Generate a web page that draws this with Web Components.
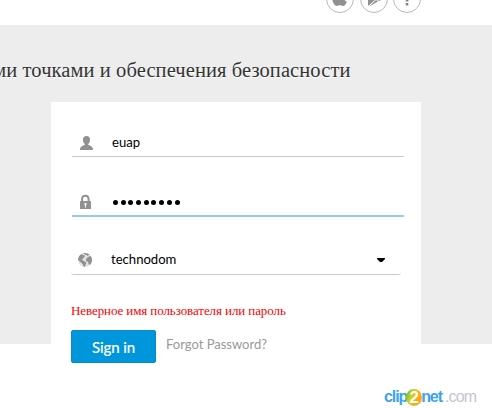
<!DOCTYPE html>
<html lang="ru"><head><meta charset="utf-8"><title>Sign in</title>
<style>html,body{margin:0;height:100%;overflow:hidden;background:#fff}</style></head>
<body><login-page></login-page>
<script>
const define=(name,html)=>{const t=document.createElement('template');t.innerHTML=html;
customElements.define(name,class extends HTMLElement{constructor(){super();this.attachShadow({mode:'open'}).append(t.content.cloneNode(true));}});};

define('round-link',`<style>:host{display:block;box-sizing:border-box;width:28px;height:28px;border:1px solid #b8b8b8;border-radius:50%}svg,::slotted(svg){display:block;width:26px;height:26px}</style><slot></slot>`);

define('form-field',`<style>
:host{display:flex;box-sizing:border-box;align-items:center;height:28px;width:332px;border-bottom:1px solid #c8c8c8;font:13.1px/16px Lato,sans-serif;color:#000}
.icon{display:block;width:16px;height:16px;margin-left:6px}
.value{flex:1;margin:-2px 0 0 18px;white-space:pre}
::slotted(svg){display:block}
</style><span class="icon"><slot name="icon"></slot></span><span class="value"><slot></slot></span><slot name="end"></slot>`);

define('sign-button',`<style>:host{display:block}button{display:block;box-sizing:border-box;width:85px;height:33px;padding:0;border:1px solid #078acb;border-radius:2px;background:#0096db;color:#fff;font:400 15px/30px Lato,sans-serif;letter-spacing:-.1px;-webkit-text-stroke:.2px #fff}</style><button><slot></slot></button>`);

define('clip-mark',`<style>:host{display:flex;align-items:center;font:bold 16px/20px "Liberation Sans",sans-serif;letter-spacing:-1.1px;color:#3ba4e8}
.two{display:block;width:16px;height:17px;border-radius:50%;background:linear-gradient(115deg,#62ba18 5%,#c7d51b 35%,#ffa51b 70%);color:#fff;font-size:17px;line-height:17px;text-align:center;letter-spacing:0;margin:0 -1px 0 -1px}
.com{font-weight:normal;color:#c5c5cf;margin-left:3px;letter-spacing:-.8px}</style>
<span>clip</span><span class="two">2</span><span>net</span><span class="com">.com</span>`);

define('login-page',`<style>
:host{display:block;position:relative;width:492px;height:408px;overflow:hidden;background:#fff}
header{box-sizing:border-box;height:25px;display:flex;justify-content:flex-end;padding-right:71px;gap:5.5px}
header round-link{margin-top:-15px;flex:none}
main{height:319px;background:#ededed}
h1{box-sizing:border-box;height:77px;width:350.5px;margin:0;padding-top:33px;display:flex;justify-content:flex-end;font:normal 20.5px/24px "Liberation Serif",serif;letter-spacing:.09px;color:#333;white-space:nowrap;text-shadow:0 1px #fff}
form{display:flex;flex-direction:column;box-sizing:border-box;width:370px;height:306px;margin-left:51px;padding:27px 17px 0 21px;background:#fff}
.pass{margin-top:31px;height:29px;border-bottom:2px solid #97caf2}
.domain{margin:29px 0 0 -1px;width:330px;height:29px;border-bottom-color:#ccc;border-radius:0 0 3px 3px}
.bullets{display:flex;gap:2.7px;padding:3px 0 0 1px}.bullets i{width:5px;height:5px;border-radius:50%;background:#000}
.arrow{margin:-1px 16px 0 0}
.error{margin:27px 0 0 -1px;font:13px/18px "Liberation Serif",serif;letter-spacing:-.09px;color:#f00;white-space:nowrap}
.actions{display:flex;gap:10px;margin:10px 0 0 -1px;align-items:center}
.forgot{font:13px/18px Lato,sans-serif;color:#999;margin-top:-6px;white-space:nowrap}
clip-mark{position:absolute;left:384px;top:387px}
</style>
<header>
<round-link><svg viewBox="0 0 26 26" fill="#909090"><path d="M13 7.5c2-1.4 4.5-1 6 .8-3 2-2.5 6 .8 7.4-.7 2.1-2.2 4.300-4 4.300-1.300 0-1.800-.7-3-.7s-1.800.7-3 .7C7 20 3.600 13 6.300 9c1.700-2.500 4.200-2.400 6.700-1.500z"/></svg></round-link>
<round-link><svg viewBox="0 0 26 26" fill="#909090"><path d="M7 5v15l8-7zM8 20.500l7-6.500 2 1.500zM14 13l3.500-3L22 13l-4 2z"/></svg></round-link>
<round-link><svg viewBox="0 0 26 26" fill="none" stroke="#858585" stroke-width="2.600"><path d="M9 9c.5-5 8-4 7.500 0-.3 2.200-3.500 2.500-3.500 6.500M13 17v2.500"/></svg></round-link>
</header>
<main><h1><span>ми точками и обеспечения безопасности</span></h1>
<form>
<form-field><svg slot="icon" width="16" height="16" viewBox="0 0 16 16" fill="#919191"><path d="M8.500 1c4.700 0 4.200 6 1.800 8v1c2.300.8 4.700 1.400 4.700 5H2c0-3.600 2.400-4.200 4.700-5V9C4.300 7 3.800 1 8.500 1z"/></svg>euap</form-field>
<form-field class="pass"><svg slot="icon" width="16" height="16" viewBox="0 0 16 16"><path d="M4 8V5.500c0-5 6.600-5 6.600 0V8" fill="none" stroke="#919191" stroke-width="2"/><rect x="2" y="7" width="11" height="8" rx=".5" fill="#919191"/><path d="M6.300 10.500c-.5-2 3-2 2.300 0l-.6.700V13.500H7v-2.300z" fill="#fff"/></svg><span class="bullets"><i></i><i></i><i></i><i></i><i></i><i></i><i></i><i></i><i></i></span></form-field>
<form-field class="domain"><svg slot="icon" width="16" height="16" viewBox="0 0 16 16" fill="#919191"><circle cx="8" cy="8" r="7" fill="#e2e2e2"/><path d="M1 8C1 5.500 2.500 3.200 4.500 2L6 3l2 .5-.5 1.500L6 6.500 5 8l3 1.500 1.500 1.300-1 2L8 15c-1.200 0-2-1-2-2.500L3.500 10zM6 1.300C9 .4 11 1.300 12.500 2.600L10.500 4 9.500 3 8 2.500zM9 7l2-2 2.700-1C15 6 15.300 8 14.800 10L13 13l-1.500-1-.4-2.300L9 9z"/></svg>technodom<svg class="arrow" slot="end" width="8" height="4" viewBox="0 0 8 4"><path d="M0 0h8v1L5 4H3L0 1z"/></svg></form-field>
<div class="error"><span>Неверное имя пользователя или пароль</span></div>
<div class="actions"><sign-button>Sign in</sign-button><span class="forgot">Forgot Password?</span></div>
</form></main><clip-mark></clip-mark>`);
</script></body></html>
